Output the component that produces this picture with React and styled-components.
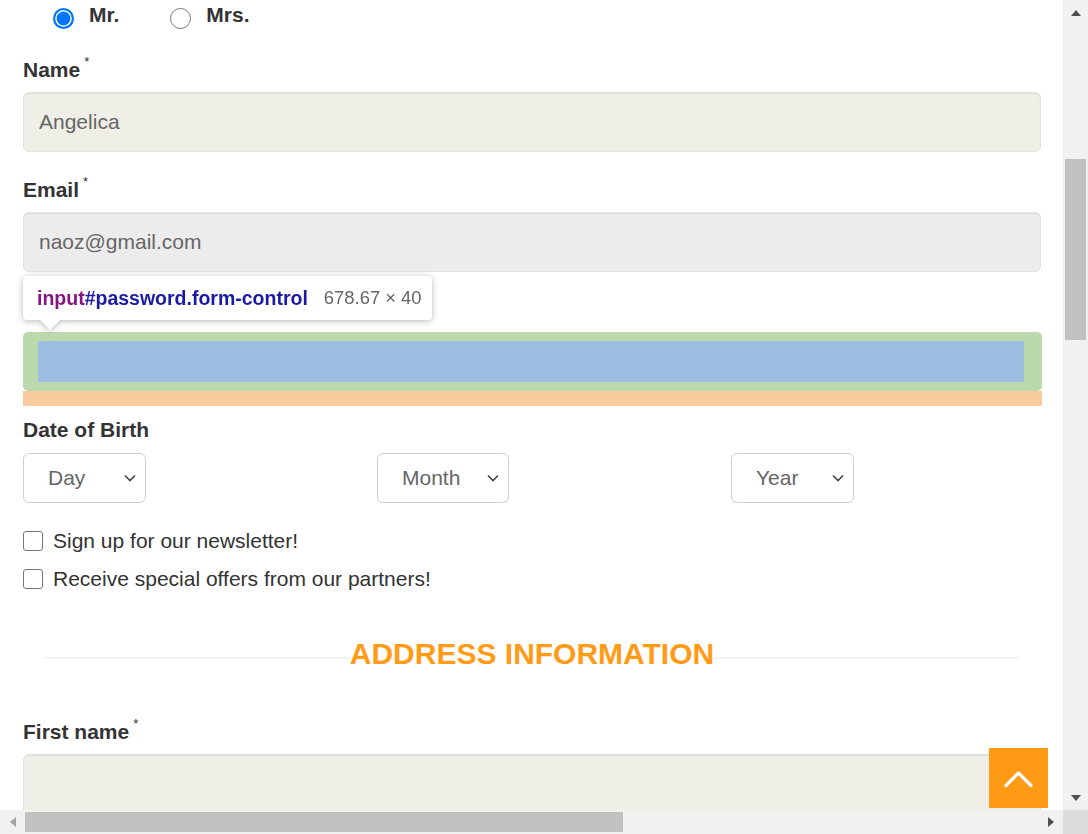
import React from "react";
import styled, { createGlobalStyle } from "styled-components";

const GlobalStyle = createGlobalStyle`
  html, body {
    margin: 0;
    padding: 0;
    overflow: hidden;
    background: #fff;
  }
  body {
    font-family: "Liberation Sans", Arial, sans-serif;
    color: #333;
  }
  * {
    box-sizing: border-box;
  }
`;

const Frame = styled.div`
  display: grid;
  grid-template-columns: 1063px 25px;
  grid-template-rows: 810px 24px;
  width: 1088px;
  height: 834px;
`;

const Viewport = styled.div`
  position: relative;
  overflow: hidden;
  background: #fff;
`;

const Form = styled.form`
  width: 1018px;
  margin-left: 23px;
`;

const RadioRow = styled.div`
  display: flex;
  gap: 51px;
  height: 32px;
  margin-bottom: 26px;
  padding-left: 30px;
`;

const RadioOption = styled.label`
  display: flex;
  align-items: flex-start;
  gap: 15px;
`;

const Radio = styled.span`
  width: 21px;
  height: 21px;
  margin-top: 8px;
  border-radius: 50%;
  border: ${({ $checked }) => ($checked ? "2px solid #0075ff" : "1.5px solid #767676")};
  background: ${({ $checked }) => ($checked ? "#0075ff" : "#fff")};
  box-shadow: ${({ $checked }) => ($checked ? "inset 0 0 0 1.6px #fff" : "none")};
`;

const RadioText = styled.span`
  margin-top: 3px;
  font-size: 21px;
  font-weight: bold;
  line-height: 24px;
  color: #333;
`;

const Group = styled.div`
  margin-bottom: ${({ $mb }) => $mb ?? 26}px;
`;

const Label = styled.label`
  display: block;
  font-size: 21px;
  font-weight: bold;
  line-height: 24px;
  margin-bottom: ${({ $mb }) => $mb ?? 10}px;
  color: #333;
`;

/* the password label sits under the devtools tooltip, so only its space shows */
const LabelSpace = styled.div`
  height: 24px;
  margin-bottom: 10px;
`;

const Req = styled.span`
  font-size: 13px;
  font-weight: normal;
  line-height: 0;
  vertical-align: 11px;
  margin-left: 4px;
`;

const TextInput = styled.input`
  display: block;
  width: 100%;
  height: 60px;
  padding: 0 15px;
  border: 1px solid #e4e4de;
  border-radius: 6px;
  background: ${({ $bg }) => $bg};
  box-shadow: inset 0 1px 1px rgba(0, 0, 0, 0.075);
  font-family: "Liberation Sans", Arial, sans-serif;
  font-size: 21px;
  color: #666;
  outline: none;
`;

const HighlightPad = styled.div`
  width: 1019px;
  padding: 9px 18px 9px 15px;
  border-radius: 5px;
  background: #bcd9ae;
`;

const HighlightContent = styled.div`
  height: 41px;
  background: #9dc0e2;
`;

const HighlightMargin = styled.div`
  width: 1019px;
  height: 15px;
  background: #f8cc9e;
`;

const SelectRow = styled.div`
  display: grid;
  grid-template-columns: repeat(3, 354px);
`;

const Select = styled.div`
  display: flex;
  align-items: center;
  justify-content: space-between;
  width: ${({ $w }) => $w}px;
  height: 50px;
  padding: 0 9px 0 24px;
  border: 1px solid #cfcfcf;
  border-radius: 6px;
  background: #fff;
  font-size: 21px;
  color: #666;
`;

const CheckList = styled.div`
  display: flex;
  flex-direction: column;
  gap: 13.5px;
  margin-bottom: 45.5px;
`;

const CheckRow = styled.label`
  display: flex;
  align-items: center;
  gap: 10px;
  font-size: 21px;
  line-height: 24px;
  color: #333;
`;

const CheckBox = styled.span`
  width: 20px;
  height: 20px;
  border: 1.5px solid #767676;
  border-radius: 3px;
  background: #fff;
`;

const SectionHead = styled.div`
  display: grid;
  margin-bottom: 48px;
`;

const SectionLine = styled.div`
  grid-area: 1 / 1;
  align-self: start;
  height: 2px;
  margin: 21px 23px 0 22px;
  background: #f2f2f2;
`;

const SectionTitle = styled.h3`
  grid-area: 1 / 1;
  justify-self: center;
  margin: 0;
  background: #fff;
  font-size: 30px;
  line-height: 36px;
  font-weight: bold;
  color: #ff9b17;
`;

const Tooltip = styled.div`
  position: absolute;
  left: 23px;
  top: 276px;
  width: 409px;
  height: 44px;
  padding: 0 14px;
  display: flex;
  align-items: center;
  gap: 16px;
  background: #fff;
  border-radius: 4px;
  filter: drop-shadow(0 1px 3px rgba(0, 0, 0, 0.28));
  font-family: "Liberation Sans", Arial, sans-serif;
  white-space: nowrap;

  &::after {
    content: "";
    position: absolute;
    left: 17px;
    top: 100%;
    border-left: 10px solid transparent;
    border-right: 10px solid transparent;
    border-top: 10px solid #fff;
  }
`;

const Path = styled.span`
  font-size: 19.5px;
  font-weight: bold;
`;

const TagName = styled.span`
  color: #881280;
`;

const Selector = styled.span`
  color: #1a1aa6;
`;

const Dims = styled.span`
  font-size: 18.4px;
  color: #666;
`;

const BackToTop = styled.button`
  position: absolute;
  right: 15px;
  bottom: 2px;
  width: 59px;
  height: 60px;
  padding: 0;
  border: none;
  background: #ff9a14;
  display: block;
`;

const VBar = styled.div`
  display: flex;
  flex-direction: column;
  background: #f1f1f1;
`;

const HBar = styled.div`
  display: flex;
  background: #f1f1f1;
`;

const Corner = styled.div`
  background: #dcdcdc;
`;

const ArrowCell = styled.div`
  flex: 0 0 25px;
  display: flex;
  align-items: center;
  justify-content: center;
`;

const Triangle = styled.span`
  width: 0;
  height: 0;
  ${({ $dir, $color }) => {
    const c = $color || "#505050";
    if ($dir === "up")
      return `border-left: 5.5px solid transparent; border-right: 5.5px solid transparent; border-bottom: 6px solid ${c};`;
    if ($dir === "down")
      return `border-left: 5.5px solid transparent; border-right: 5.5px solid transparent; border-top: 6px solid ${c};`;
    if ($dir === "left")
      return `border-top: 5.5px solid transparent; border-bottom: 5.5px solid transparent; border-right: 6px solid ${c};`;
    return `border-top: 5.5px solid transparent; border-bottom: 5.5px solid transparent; border-left: 6px solid ${c};`;
  }}
`;

const VTrack = styled.div`
  flex: 1;
  padding: 134px 2px 0;
`;

const HTrack = styled.div`
  flex: 1;
  padding: 2px 0;
`;

const Thumb = styled.div`
  background: #c1c1c1;
  width: ${({ $w }) => ($w ? `${$w}px` : "100%")};
  height: ${({ $h }) => ($h ? `${$h}px` : "100%")};
`;

const Chevron = () => (
  <svg width="12" height="8" viewBox="0 0 12 8">
    <polyline points="1,1.5 6,6.5 11,1.5" fill="none" stroke="#444" strokeWidth="1.6" />
  </svg>
);

const UpChevron = () => (
  <svg width="59" height="60" viewBox="0 0 59 60">
    <polyline
      points="17,37.5 29.5,25 42,37.5"
      fill="none"
      stroke="#fff"
      strokeWidth="3.2"
      strokeLinecap="round"
      strokeLinejoin="round"
    />
  </svg>
);

const App = () => (
  <>
    <GlobalStyle />
    <Frame>
      <Viewport>
        <Form onSubmit={(e) => e.preventDefault()}>
          <RadioRow>
            <RadioOption>
              <Radio $checked />
              <RadioText>Mr.</RadioText>
            </RadioOption>
            <RadioOption>
              <Radio />
              <RadioText>Mrs.</RadioText>
            </RadioOption>
          </RadioRow>

          <Group>
            <Label>
              Name<Req>*</Req>
            </Label>
            <TextInput $bg="#efefe8" defaultValue="Angelica" readOnly />
          </Group>

          <Group>
            <Label>
              Email<Req>*</Req>
            </Label>
            <TextInput $bg="#ececec" defaultValue="naoz@gmail.com" readOnly />
          </Group>

          <Group $mb={12}>
            <LabelSpace />
            <HighlightPad>
              <HighlightContent />
            </HighlightPad>
            <HighlightMargin />
          </Group>

          <Group>
            <Label $mb={11}>Date of Birth</Label>
            <SelectRow>
              <Select $w={123}>
                Day
                <Chevron />
              </Select>
              <Select $w={132}>
                Month
                <Chevron />
              </Select>
              <Select $w={123}>
                Year
                <Chevron />
              </Select>
            </SelectRow>
          </Group>

          <CheckList>
            <CheckRow>
              <CheckBox />
              Sign up for our newsletter!
            </CheckRow>
            <CheckRow>
              <CheckBox />
              Receive special offers from our partners!
            </CheckRow>
          </CheckList>

          <SectionHead>
            <SectionLine />
            <SectionTitle>ADDRESS INFORMATION</SectionTitle>
          </SectionHead>

          <Group>
            <Label>
              First name<Req>*</Req>
            </Label>
            <TextInput $bg="#efeee7" readOnly />
          </Group>
        </Form>

        <Tooltip>
          <Path>
            <TagName>input</TagName>
            <Selector>#password.form-control</Selector>
          </Path>
          <Dims>678.67 × 40</Dims>
        </Tooltip>

        <BackToTop aria-label="Back to top">
          <UpChevron />
        </BackToTop>
      </Viewport>

      <VBar>
        <ArrowCell>
          <Triangle $dir="up" />
        </ArrowCell>
        <VTrack>
          <Thumb $h={181} />
        </VTrack>
        <ArrowCell>
          <Triangle $dir="down" />
        </ArrowCell>
      </VBar>

      <HBar>
        <ArrowCell>
          <Triangle $dir="left" $color="#a3a3a3" />
        </ArrowCell>
        <HTrack>
          <Thumb $w={598} />
        </HTrack>
        <ArrowCell>
          <Triangle $dir="right" />
        </ArrowCell>
      </HBar>

      <Corner />
    </Frame>
  </>
);

export default App;
